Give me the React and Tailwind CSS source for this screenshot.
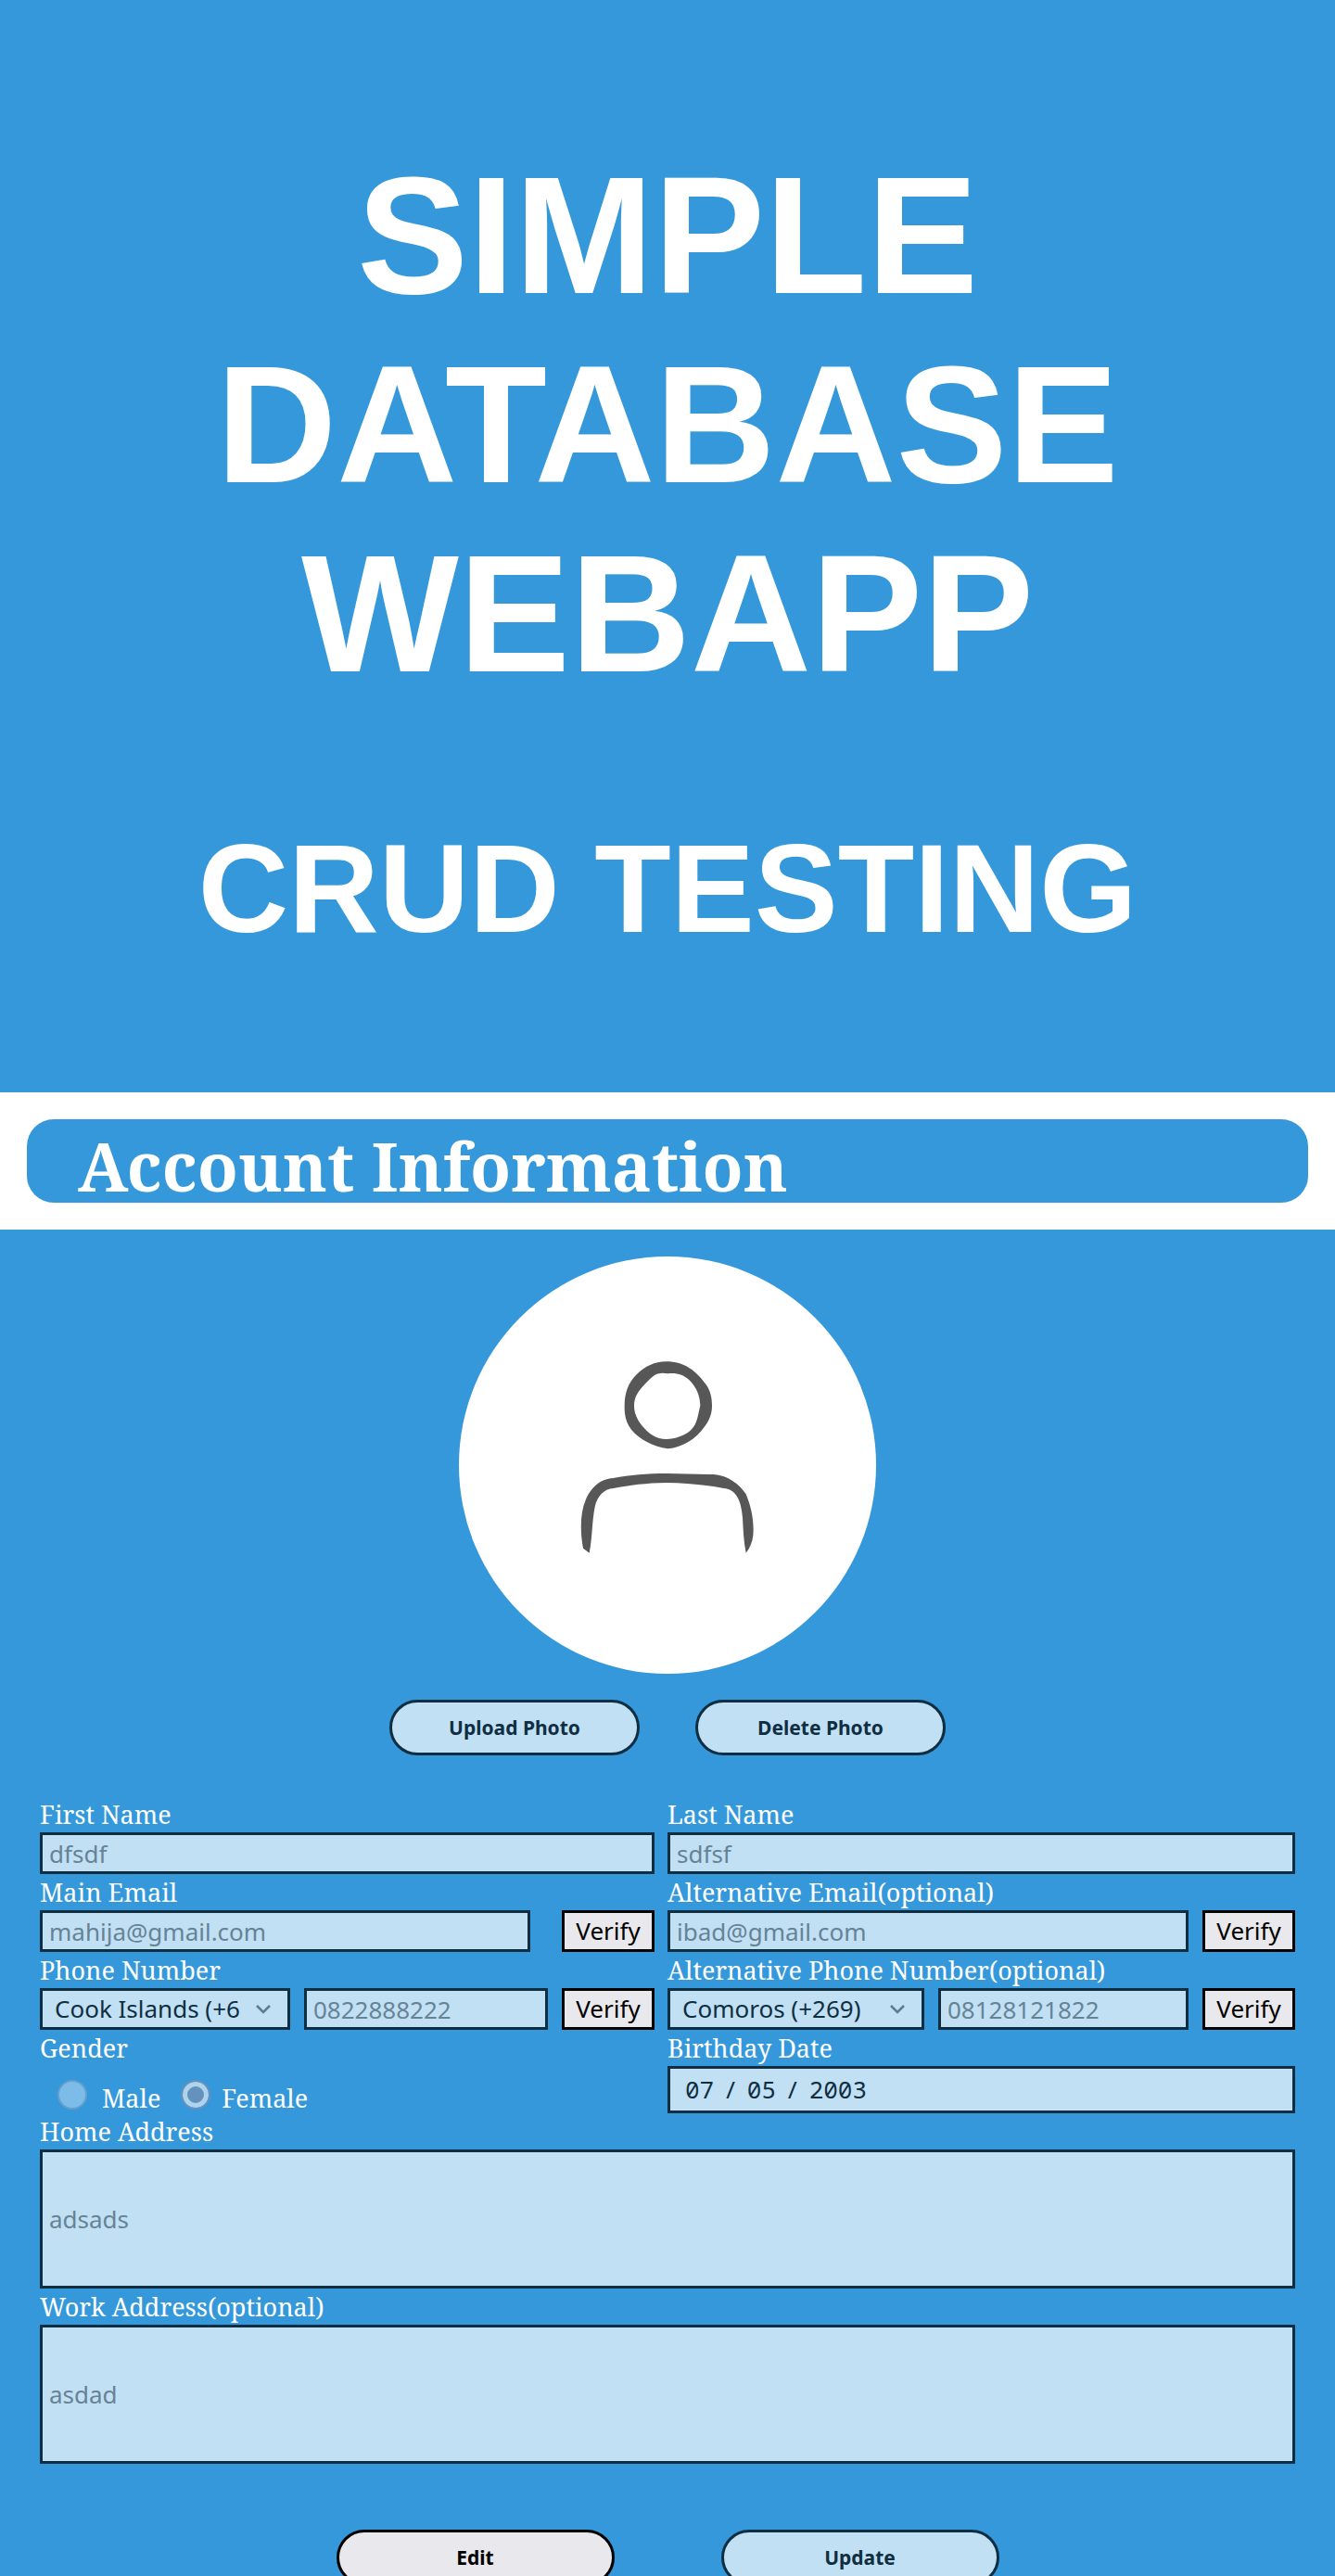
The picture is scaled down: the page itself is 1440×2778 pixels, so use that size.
import React from "react";

const serif = "font-['Noto_Serif','DejaVu_Serif',serif]";
const sans = "font-[system-ui,'Noto_Sans',sans-serif]";
const box = "block w-full min-w-0 rounded-none border-[3px] border-[#102e42] bg-[#c1e0f4] text-[26px] text-[#102e42] outline-none";
const field = `${box} ${sans} h-[45px] px-[7px] placeholder:text-[#668396] placeholder:opacity-100`;

function Label({ htmlFor, children }) {
  return (
    <label htmlFor={htmlFor} className="block h-[39px] text-[27px] leading-[39px] whitespace-nowrap text-white">
      {children}
    </label>
  );
}

function Field({ id, label, type = "text", placeholder }) {
  return (
    <div className="min-w-0 flex-1">
      <Label htmlFor={id}>{label}</Label>
      <input id={id} type={type} placeholder={placeholder} className={field} />
    </div>
  );
}

function Verify() {
  return (
    <button
      type="button"
      className={`h-[45px] w-[100px] shrink-0 border-[3px] border-black bg-[#e9e9ed] text-[26px] leading-[39px] text-black ${sans}`}
    >
      Verify
    </button>
  );
}

function CountrySelect({ id, label, value }) {
  return (
    <div className="relative min-w-0">
      <select id={id} aria-label={label} defaultValue={value} className={`${box} ${sans} h-[45px] appearance-none pr-[50px] pl-[13px] leading-[39px]`}>
        <option value={value}>{value}</option>
      </select>
      <svg
        viewBox="0 0 16 10"
        className="pointer-events-none absolute top-[18px] right-[21px] h-[10px] w-[16px]"
        fill="none"
        stroke="#5c7c90"
        strokeWidth="2.6"
      >
        <path d="M1 1 L8 8 L15 1" />
      </svg>
    </div>
  );
}

function PhoneField({ id, label, countryLabel, country, placeholder }) {
  return (
    <div>
      <Label htmlFor={id}>{label}</Label>
      <div className="grid grid-cols-[277fr_270fr_auto] gap-[15px]">
        <CountrySelect id={`${id}-country`} label={countryLabel} value={country} />
        <input id={id} type="tel" placeholder={placeholder} className={field} />
        <Verify />
      </div>
    </div>
  );
}

function PillButton({ wide, light, children }) {
  return (
    <button
      type="button"
      className={`h-[60px] rounded-[30px] border-[3px] pt-0.5 text-[21px] font-bold ${sans} ${wide ? "w-[300px]" : "w-[270px]"} ${
        light ? "border-black bg-[#e9e9ed] text-black" : "border-[#102e42] bg-[#c1e0f4] text-[#102e42]"
      }`}
    >
      {children}
    </button>
  );
}

function Address({ id, label, placeholder }) {
  return (
    <div className="col-span-2">
      <Label htmlFor={id}>{label}</Label>
      <input
        id={id}
        type="text"
        placeholder={placeholder}
        className={`${box} ${sans} h-[150px] px-[7px] placeholder:text-[#668396] placeholder:opacity-100`}
      />
    </div>
  );
}

function Avatar() {
  return (
    <div className="mx-auto size-[450px] overflow-hidden rounded-full bg-white">
      <svg viewBox="45 45 1350 1350" className="size-full" fill="#575757" role="img" aria-label="Profile photo">
        <path
          fillRule="evenodd"
          d="M716 385 C775 385 812 415 845 460 C858 478 864 500 864 528 C864 555 855 575 841 594 C812 636 770 662 721 667 C675 660 630 638 603 605 C585 582 580 558 581 525 C582 487 592 455 620 427 C648 400 678 385 716 385 Z M721 424 C702 421 688 422 673 433 C660 444 649 456 637 469 C620 489 612 505 612 530 C613 555 623 574 637 592 C660 620 683 636 716 636 C745 635 775 624 794 608 C816 589 818 560 826 527 C825 492 813 468 792 446 C771 427 749 421 721 424 Z"
        />
        <path d="M447 989 C437 935 437 875 455 833 C470 797 500 764 545 762 C600 752 650 747 720 747 C770 748 820 750 869 750 C912 752 952 780 974 814 C992 858 1001 905 997 947 C995 968 987 987 974 1004 C966 965 965 925 963 890 C959 838 944 798 902 795 C840 784 780 777 716 777 C650 778 598 785 545 795 C514 797 492 822 485 855 C475 905 477 955 467 1004 Z" />
      </svg>
    </div>
  );
}

function Gender() {
  return (
    <fieldset className="min-w-0">
      <legend className="block h-[39px] text-[27px] leading-[39px] text-white">Gender</legend>
      <div className="flex items-start pt-[15px] pl-[19px] text-[27px] leading-8 text-white">
        <input
          id="male"
          type="radio"
          name="gender"
          className="size-8 appearance-none rounded-full border-2 border-[#659fcb] bg-[#7dbce9]"
        />
        <label htmlFor="male" className="mt-1 ml-4">
          Male
        </label>
        <input
          id="female"
          type="radio"
          name="gender"
          defaultChecked
          className="ml-[22px] size-8 appearance-none rounded-full border-2 border-[#6592bd] bg-[#6592bd] shadow-[inset_0_0_0_5px_#aed3ed]"
        />
        <label htmlFor="female" className="mt-1 ml-3">
          Female
        </label>
      </div>
    </fieldset>
  );
}

export default function App() {
  return (
    <div className={`h-screen overflow-hidden bg-[#3498db] ${serif}`}>
      <header className="pt-[152px] pb-[141px] text-center font-['Liberation_Sans',Arial,sans-serif] font-bold text-white">
        <h1 className="text-[180px] leading-[204px]">SIMPLE DATABASE WEBAPP</h1>
        <h2 className="mt-[117px] text-[135px] leading-[156px]">CRUD TESTING</h2>
      </header>

      <div className="bg-white p-[29px]">
        <h2 className="h-[90px] rounded-[29px] bg-[#3498db] pl-[55px] text-[72px] leading-[100px] font-bold whitespace-nowrap text-white">
          Account Information
        </h2>
      </div>

      <main className="pt-[29px]">
        <Avatar />
        <div className="mt-7 flex justify-center gap-[60px]">
          <PillButton>Upload Photo</PillButton>
          <PillButton>Delete Photo</PillButton>
        </div>

        <form className="mt-11">
          <div className="grid grid-cols-[663fr_677fr] gap-x-[14px] px-[43px]">
            <Field id="first-name" label="First Name" placeholder="dfsdf" />
            <Field id="last-name" label="Last Name" placeholder="sdfsf" />

            <div className="flex items-end gap-[34px]">
              <Field id="email" type="email" label="Main Email" placeholder="mahija@gmail.com" />
              <Verify />
            </div>
            <div className="flex items-end gap-[15px]">
              <Field id="alt-email" type="email" label="Alternative Email(optional)" placeholder="ibad@gmail.com" />
              <Verify />
            </div>

            <PhoneField
              id="phone"
              label="Phone Number"
              countryLabel="Country code"
              country="Cook Islands (+682)"
              placeholder="0822888222"
            />
            <PhoneField
              id="alt-phone"
              label="Alternative Phone Number(optional)"
              countryLabel="Alternative country code"
              country="Comoros (+269)"
              placeholder="08128121822"
            />

            <Gender />
            <div>
              <Label htmlFor="birthday">Birthday Date</Label>
              <input
                id="birthday"
                type="date"
                defaultValue="2003-07-05"
                className={`${box} h-[51px] px-[15px] font-['Noto_Sans_Mono','Noto_Sans',monospace] slashed-zero [&::-webkit-calendar-picker-indicator]:hidden [&::-webkit-datetime-edit-text]:px-[9px]`}
              />
            </div>

            <Address id="home" label="Home Address" placeholder="adsads" />
            <Address id="work" label="Work Address(optional)" placeholder="asdad" />
          </div>

          <div className="mt-[71px] flex justify-center gap-[115px]">
            <PillButton wide light>
              Edit
            </PillButton>
            <PillButton wide>Update</PillButton>
          </div>
        </form>
      </main>
    </div>
  );
}
